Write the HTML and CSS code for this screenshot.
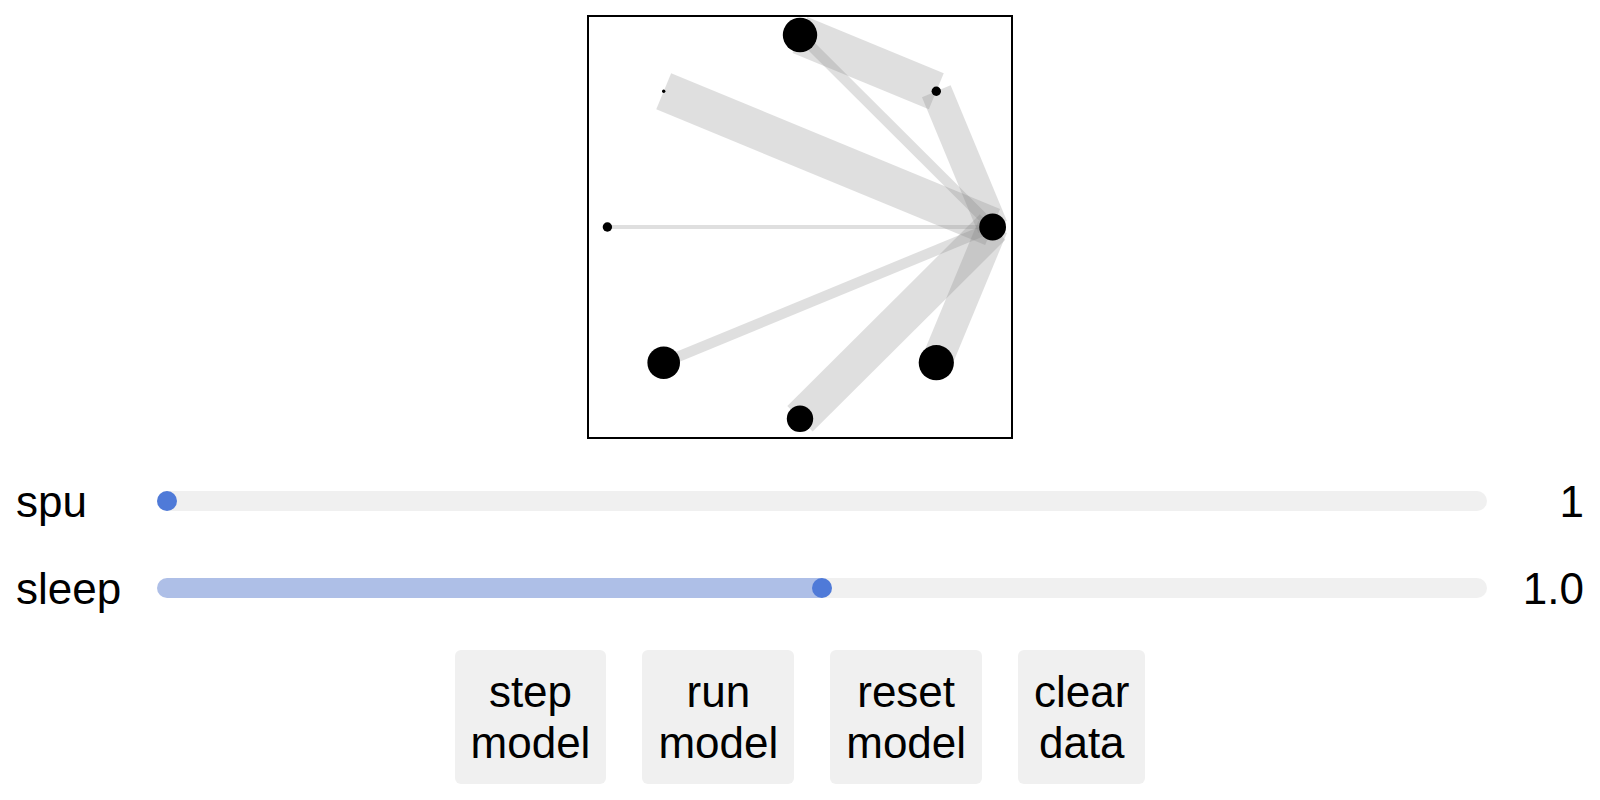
FILE: index.html
```html
<!DOCTYPE html>
<html lang="en">
<head>
<meta charset="utf-8">
<meta name="viewport" content="width=device-width, initial-scale=1">
<title>Model explorer</title>
<link rel="stylesheet" href="styles.css">
</head>
<body>
<main class="app">
  <svg class="plot" viewBox="0 0 426 424" role="img" aria-label="Network of eight nodes">
    <rect class="frame" x="1" y="1" width="424" height="422"/>
    <g class="edges">
      <line x1="213" y1="20" x2="349.3" y2="76.3" stroke-width="39"/>
      <line x1="349.3" y1="76.3" x2="405.6" y2="212" stroke-width="31"/>
      <line x1="213" y1="20" x2="405.6" y2="212" stroke-width="10"/>
      <line x1="76.7" y1="76.3" x2="405.6" y2="212" stroke-width="39"/>
      <line x1="20.4" y1="212" x2="405.6" y2="212" stroke-width="4"/>
      <line x1="76.7" y1="347.7" x2="405.6" y2="212" stroke-width="10.5"/>
      <line x1="213" y1="403.8" x2="405.6" y2="212" stroke-width="36"/>
      <line x1="349.3" y1="347.7" x2="405.6" y2="212" stroke-width="31"/>
    </g>
    <g class="nodes">
      <circle cx="405.6" cy="212" r="13.4"/>
      <circle cx="349.3" cy="76.3" r="4.7"/>
      <circle cx="213" cy="20" r="17.2"/>
      <circle cx="76.7" cy="76.3" r="1.7"/>
      <circle cx="20.4" cy="212" r="4.7"/>
      <circle cx="76.7" cy="347.7" r="16.3"/>
      <circle cx="213" cy="403.8" r="13.2"/>
      <circle cx="349.3" cy="347.7" r="17.6"/>
    </g>
  </svg>

  <div class="sliders">
    <label for="spu">spu</label>
    <input class="slider" id="spu" type="range" min="1" max="50" value="1" style="--fill: 0%">
    <output class="value" for="spu">1</output>
    <label for="sleep">sleep</label>
    <input class="slider" id="sleep" type="range" min="0" max="2" step="0.1" value="1" style="--fill: 50%">
    <output class="value" for="sleep">1.0</output>
  </div>

  <div class="actions">
    <button class="button" type="button">step<br>model</button>
    <button class="button" type="button">run<br>model</button>
    <button class="button" type="button">reset<br>model</button>
    <button class="button" type="button">clear<br>data</button>
  </div>
</main>
</body>
</html>
```
FILE: styles.css
```css
body {
  margin: 0;
  background: #fff;
  color: #000;
  font-family: "Nimbus Sans", "Liberation Sans", sans-serif;
  font-size: 44px;
  line-height: 51px;
}

.app {
  display: flex;
  flex-direction: column;
  gap: 36px;
  padding: 15px 16px 16px;
}

.plot {
  display: block;
  align-self: center;
  width: 426px;
  max-width: 100%;
  margin-bottom: 1px;
}

.frame {
  fill: none;
  stroke: #000;
  stroke-width: 2;
}

.edges {
  stroke: #808080;
  stroke-opacity: 0.25;
}

.sliders {
  display: grid;
  grid-template-columns: auto 1fr auto;
  align-items: center;
  gap: 36px;
}

.slider {
  appearance: none;
  width: 100%;
  min-width: 0;
  height: 20px;
  margin: 0 0 2px;
  border-radius: 10px;
  background: linear-gradient(to right, #aebfe7 var(--fill), #f0f0f0 var(--fill));
}

.slider::-webkit-slider-thumb {
  appearance: none;
  width: 20px;
  height: 20px;
  border-radius: 50%;
  background: #4f7ad8;
}

.slider::-moz-range-thumb {
  width: 20px;
  height: 20px;
  border: 0;
  border-radius: 50%;
  background: #4f7ad8;
}

.value {
  text-align: right;
}

.actions {
  display: flex;
  flex-wrap: wrap;
  justify-content: center;
  gap: 36px;
}

.button {
  padding: 16px;
  border: 0;
  border-radius: 6px;
  background: #f0f0f0;
  color: inherit;
  font: inherit;
}
```
